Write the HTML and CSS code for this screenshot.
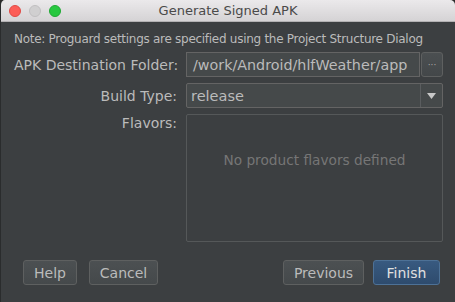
FILE: index.html
```html
<!DOCTYPE html>
<html lang="en">
<head>
  <meta charset="UTF-8">
  <title>Generate Signed APK</title>
  <link rel="stylesheet" href="styles.css">
</head>
<body>
  <div class="window">
    <!-- Title bar -->
    <div class="titlebar">
      <div class="lights">
        <span class="light red"></span>
        <span class="light gray"></span>
        <span class="light green"></span>
      </div>
      <div class="title">Generate Signed APK</div>
    </div>

    <div class="content">
      <div class="note">Note: Proguard settings are specified using the Project Structure Dialog</div>

      <div class="form">
        <label class="label">APK Destination Folder:</label>
        <div class="field-row">
          <div class="textfield">/work/Android/hlfWeather/app</div>
          <div class="browse">&middot;&middot;&middot;</div>
        </div>

        <label class="label">Build Type:</label>
        <div class="combo">
          <div class="combo-value">release</div>
          <div class="combo-arrow">
            <svg width="9" height="6" viewBox="0 0 9 6"><path d="M0 0 L9 0 L4.5 6 Z" fill="#c8c8c8"/></svg>
          </div>
        </div>

        <label class="label label-top">Flavors:</label>
        <div class="flavors">
          <div class="empty">No product flavors defined</div>
        </div>
      </div>

      <div class="footer">
        <div class="group left">
          <button class="btn help">Help</button>
          <button class="btn cancel">Cancel</button>
        </div>
        <div class="group right">
          <button class="btn previous">Previous</button>
          <button class="btn primary">Finish</button>
        </div>
      </div>
    </div>
  </div>
</body>
</html>
```

FILE: styles.css
```css
html, body {
  margin: 0;
  padding: 0;
  width: 455px;
  height: 302px;
  overflow: hidden;
  background-color: #2b2b2b;
}

body {
  font-family: 'DejaVu Sans', 'Open Sans', sans-serif;
  font-size: 12px;
  color: #bbbbbb;
}

.window {
  width: 455px;
  height: 302px;
  display: flex;
  flex-direction: column;
  background-color: #3c3f41;
  box-sizing: border-box;
  border-left: 1px solid #2a2c2d;
  border-radius: 5px 5px 0 0;
  overflow: hidden;
}

/* Title bar */
.titlebar {
  height: 22px;
  flex: none;
  position: relative;
  display: flex;
  align-items: center;
  justify-content: center;
  background: linear-gradient(#ebe9eb, #d5d3d5);
  border-bottom: 1px solid #b3b1b3;
  box-sizing: border-box;
}

.lights {
  position: absolute;
  left: 8px;
  top: 5px;
  display: flex;
  gap: 8px;
}

.light {
  width: 12px;
  height: 12px;
  border-radius: 50%;
  box-sizing: border-box;
}

.light.red {
  background-color: #fc5d57;
  border: 1px solid #df4a45;
}

.light.gray {
  background-color: #d0cfd0;
  border: 1px solid #c0bfc0;
}

.light.green {
  background-color: #28c840;
  border: 1px solid #20a934;
}

.title {
  color: #4a4a4a;
  font-size: 13px;
}

/* Body */
.content {
  flex: 1;
  display: flex;
  flex-direction: column;
  padding: 8px 12px 17px 13px;
}

.note {
  white-space: nowrap;
  line-height: 16px;
  letter-spacing: -0.28px;
  padding-top: 1px;
}

.form {
  margin-top: 5px;
  display: grid;
  grid-template-columns: 163px minmax(0, 1fr);
  column-gap: 9px;
  row-gap: 6px;
  align-items: center;
}

.label {
  text-align: right;
  font-size: 14px;
  white-space: nowrap;
}

.label-top {
  align-self: start;
  padding-top: 1px;
}

.field-row {
  display: flex;
  gap: 1px;
}

.textfield {
  flex: 1;
  min-width: 0;
  height: 25px;
  box-sizing: border-box;
  border: 1px solid #646464;
  background-color: #45494a;
  padding: 0 6px;
  display: flex;
  align-items: center;
  font-size: 14.3px;
  color: #bbbbbb;
  white-space: nowrap;
  overflow: hidden;
}

.browse {
  width: 22px;
  height: 25px;
  box-sizing: border-box;
  border: 1px solid #5e6060;
  border-radius: 3px;
  background: linear-gradient(#4b4f51, #434749);
  display: flex;
  align-items: center;
  justify-content: center;
  font-size: 9px;
  color: #aaaaaa;
}

.combo {
  height: 25px;
  box-sizing: border-box;
  display: flex;
  border: 1px solid #646464;
  background-color: #45494a;
  border-radius: 2px;
}

.combo-value {
  flex: 1;
  display: flex;
  align-items: center;
  padding: 0 4px;
  font-size: 14.5px;
}

.combo-arrow {
  width: 21px;
  border-left: 1px solid #5a5d5f;
  display: flex;
  align-items: center;
  justify-content: center;
}

.flavors {
  height: 128px;
  box-sizing: border-box;
  border: 1px solid #555859;
  border-radius: 2px;
  display: flex;
  justify-content: center;
  padding-top: 37px;
}

.empty {
  color: #767676;
  font-size: 13.7px;
}

/* Buttons */
.footer {
  margin-top: auto;
  display: flex;
  justify-content: space-between;
  padding-left: 9px;
  padding-right: 3px;
}

.group {
  display: flex;
}

.group.left {
  gap: 12px;
}

.group.right {
  gap: 9px;
}

.btn {
  height: 25px;
  padding: 0;
  font-family: 'DejaVu Sans', 'Open Sans', sans-serif;
  font-size: 14px;
  color: #bbbbbb;
  background: linear-gradient(#4c5052, #45494b);
  border: 1px solid #5e6060;
  border-radius: 3px;
}

.btn.help {
  width: 54px;
}

.btn.cancel {
  width: 69px;
}

.btn.previous {
  width: 81px;
}

.btn.primary {
  width: 67px;
  color: #e0e0e0;
  background: linear-gradient(#385a80, #2e4b6d);
  border: 1px solid #4d7196;
}
```
